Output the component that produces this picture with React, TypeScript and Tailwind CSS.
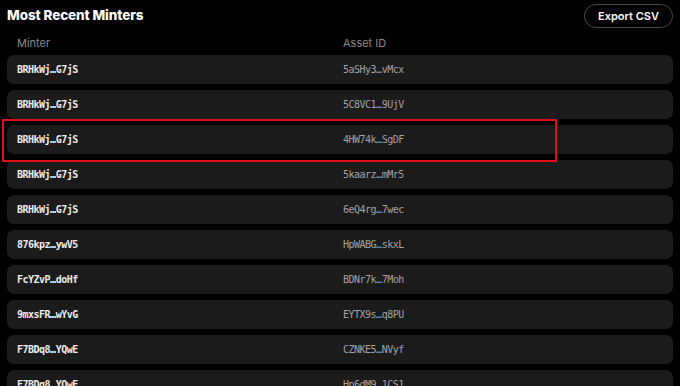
import React from "react";

const rows: [string, string][] = [
  ["BRHkWj…G7jS", "5aSHy3…vMcx"],
  ["BRHkWj…G7jS", "5C8VC1…9UjV"],
  ["BRHkWj…G7jS", "4HW74k…SgDF"],
  ["BRHkWj…G7jS", "5kaarz…mMr5"],
  ["BRHkWj…G7jS", "6eQ4rg…7wec"],
  ["876kpz…ywV5", "HpWABG…skxL"],
  ["FcYZvP…doHf", "BDNr7k…7Moh"],
  ["9mxsFR…wYvG", "EYTX9s…q8PU"],
  ["F7BDq8…YQwE", "CZNKE5…NVyf"],
  ["F7BDq8…YQwE", "Hp6dM9…1CS1"],
];

const mono = { fontFamily: '"DejaVu Sans Mono", "Liberation Mono", monospace' };

export default function App() {
  return (
    <div
      className="relative w-[680px] h-[386px] overflow-hidden bg-black px-[7px]"
      style={{ fontFamily: 'Inter, "Noto Sans", sans-serif' }}
    >
      <div className="flex items-center justify-between h-[34px]">
        <h1 className="text-[13.5px] font-extrabold text-white tracking-[-0.1px] leading-none -mt-[2px]">
          Most Recent Minters
        </h1>
        <button className="h-[24px] w-[89px] rounded-full border border-[#4a4a4a] text-[11px] font-semibold text-white -mt-[2px]">
          Export CSV
        </button>
      </div>
      <div className="grid grid-cols-[326px_1fr] pl-[10px] h-[19px] items-center text-[11px] text-[#8a8a8a]">
        <span>Minter</span>
        <span>Asset ID</span>
      </div>
      <div className="flex flex-col gap-[6px] mt-[2px]">
        {rows.map(([m, a], i) => (
          <div
            key={i}
            className="grid grid-cols-[326px_1fr] items-center pl-[10px] h-[29px] rounded-[7px] bg-[#1b1b1b]"
          >
            <span style={mono} className="text-[10px] tracking-[-0.5px] font-bold text-[#ececec]">
              {m}
            </span>
            <span style={mono} className="text-[10px] tracking-[-0.5px] text-[#a3a3a3]">
              {a}
            </span>
          </div>
        ))}
      </div>
      <div className="absolute left-[2px] top-[119px] w-[555px] h-[43px] border-2 border-[#e0101a]" />
    </div>
  );
}
